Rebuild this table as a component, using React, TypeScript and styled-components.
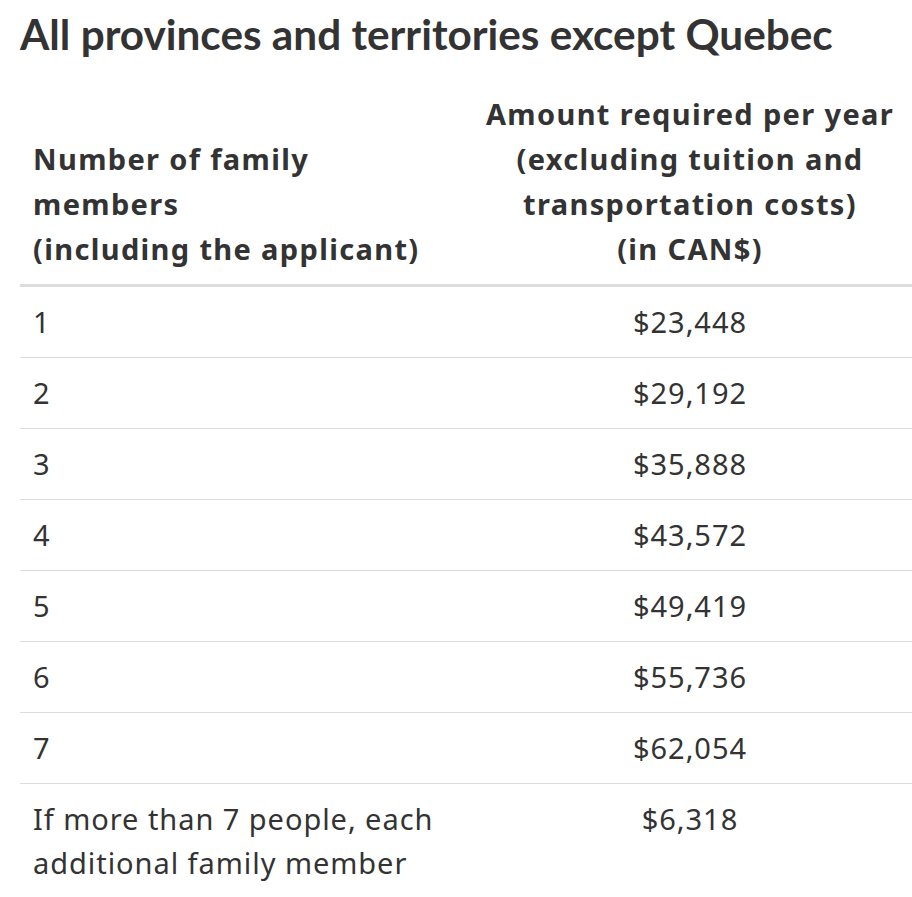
import React from "react";
import styled, { createGlobalStyle } from "styled-components";

const Global = createGlobalStyle`
  html, body { margin: 0; padding: 0; background: #fff; }
  body { font-family: "Noto Sans", "Open Sans", sans-serif; color: #333; }
`;

const Page = styled.main`
  padding: 0 0 0 20px;
`;

const Title = styled.h2`
  font-family: Lato, "Noto Sans", sans-serif;
  font-weight: 700;
  font-size: 42.3px;
  line-height: 46.75px;
  margin: 11px 0 0 0;
  color: #333;
`;

const Table = styled.table`
  width: 892px;
  border-collapse: collapse;
  margin-top: 20px;
  font-size: 29px;
  line-height: 44px;
  letter-spacing: 0.95px;
  color: #333;
`;

const HeadCell = styled.th<{ $align?: "left" | "center" }>`
  text-align: ${(p) => p.$align ?? "left"};
  vertical-align: bottom;
  font-weight: 700;
  line-height: 45px;
  letter-spacing: 1.35px;
  padding: 13px;
  border-bottom: 3px solid #ddd;
  width: ${(p) => (p.$align === "center" ? "418px" : "auto")};
`;

const Cell = styled.td<{ $align?: "left" | "center" }>`
  text-align: ${(p) => p.$align ?? "left"};
  vertical-align: top;
  padding: 13px;
  border-top: 1px solid #ddd;
`;

const BodyRow = styled.tr`
  &:first-child td { border-top: none; }
`;

const rows: [string, string][] = [
  ["1", "$23,448"],
  ["2", "$29,192"],
  ["3", "$35,888"],
  ["4", "$43,572"],
  ["5", "$49,419"],
  ["6", "$55,736"],
  ["7", "$62,054"],
  ["If more than 7 people, each additional family member", "$6,318"],
];

export default function App() {
  return (
    <Page>
      <Global />
      <Title>All provinces and territories except Quebec</Title>
      <Table>
        <thead>
          <tr>
            <HeadCell>
              Number of family members
              <br />
              (including the applicant)
            </HeadCell>
            <HeadCell $align="center">
              Amount required per year (excluding tuition and transportation costs)
              <br />
              (in CAN$)
            </HeadCell>
          </tr>
        </thead>
        <tbody>
          {rows.map(([a, b]) => (
            <BodyRow key={a}>
              <Cell>{a}</Cell>
              <Cell $align="center">{b}</Cell>
            </BodyRow>
          ))}
        </tbody>
      </Table>
    </Page>
  );
}
